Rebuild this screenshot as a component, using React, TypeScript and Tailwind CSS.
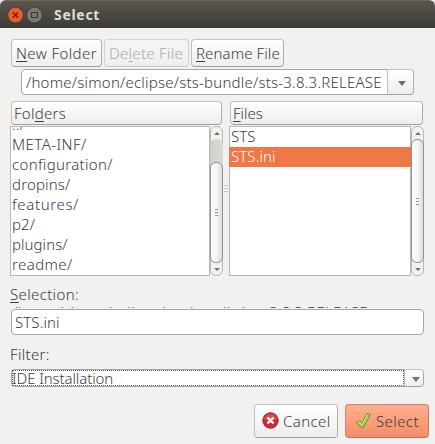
import React from "react";

const rows = [
  { name: "../", tracking: "tracking-[0.2px]" },
  { name: "META-INF/", tracking: "tracking-[0.45px]" },
  { name: "configuration/", tracking: "tracking-[0.32px]" },
  { name: "dropins/", tracking: "tracking-[0.15px]" },
  { name: "features/", tracking: "tracking-[0.65px]" },
  { name: "p2/", tracking: "tracking-[0.1px]" },
  { name: "plugins/", tracking: "tracking-[0.05px]" },
  { name: "readme/", tracking: "tracking-[0.4px]" },
];

const PATH = "/home/simon/eclipse/sts-bundle/sts-3.8.3.RELEASE";

const U = ({ children }: { children: React.ReactNode }) => (
  <span className="underline decoration-1 underline-offset-2">{children}</span>
);

const base = "flex shrink-0 items-center rounded-[4px] border bg-gradient-to-b whitespace-nowrap";
const button = base + " border-[#c3c0bb] border-b-[#a3a09b] border-r-[#b0ada8] from-white to-[#eeedec]";
const disabledButton = base + " border-[#d5d3d0] border-r-[#d0cecb] border-b-[#c8c6c3] from-[#f6f5f4] to-[#f0efee] text-[#acaaa8]";
const defaultButton = base + " border-[#c18a74] border-r-[#b08070] border-b-[#a87a68] from-[#ffaf91] to-[#f48d66]";

function Arrow({ up = false, large = false }: { up?: boolean; large?: boolean }) {
  return (
    <svg width={large ? 8 : 6} height={large ? 5 : 3} viewBox="0 0 8 5" preserveAspectRatio="none">
      <path d={up ? "M0 5L4 0L8 5Z" : "M0 0H8L4 5Z"} fill="#73716d" />
    </svg>
  );
}

function Grip({ wide = false }: { wide?: boolean }) {
  const bar = wide ? "h-px bg-[#cac8c4]" : "h-px bg-[#9b9893]";
  return (
    <span className={"flex flex-col " + (wide ? "w-[4px] gap-[2px]" : "w-[3px] gap-[2px]")}>
      <i className={bar} />
      <i className={bar} />
      <i className={bar} />
    </span>
  );
}

function Scrollbar({ gap }: { gap: string }) {
  return (
    <div className="flex h-[150px] w-[13px] shrink-0 flex-col rounded-[6px] border border-[#b9b6b1] bg-[#f3f2f1]">
      <div className="flex h-[12px] shrink-0 items-center justify-center"><Arrow up /></div>
      <div className={"-mx-px flex min-h-0 flex-1 flex-col rounded-[6px] bg-gradient-to-r from-[#cfcdca] to-[#dddbd8] " + gap}>
        <div className="flex flex-1 items-center justify-center rounded-[6px] border border-[#95928d] bg-gradient-to-r from-white via-[#f6f5f4] to-[#dfdddb]">
          <Grip />
        </div>
      </div>
      <div className="flex h-[12px] shrink-0 items-center justify-center"><Arrow /></div>
    </div>
  );
}

export default function App() {
  return (
    <div className="h-[444px] w-[435px] overflow-hidden bg-[#f2f1f0] font-['Noto_Sans',sans-serif] text-[15px] leading-[20px] font-light text-[#3c3c3c]">
      <div className="h-[28px] bg-[#e8e8e8]">
        <header className="flex h-[28px] items-center rounded-t-[6px] border-t border-[#6b685f] bg-gradient-to-b from-[#59564d] to-[#3d3b36] pl-[7px]">
          <svg width="36" height="18" viewBox="0 0 36 18">
            <circle cx="8.500" cy="9" r="7.900" fill="#ec5b29" stroke="#35332e" strokeWidth=".8" />
            <path d="M6 6.500l5 5m0-5l-5 5" stroke="#4a2317" strokeWidth="1.200" />
            <circle cx="27.500" cy="9" r="7.900" fill="#7a7871" stroke="#35332e" strokeWidth=".8" />
            <rect x="24.500" y="6.500" width="6" height="5" fill="none" stroke="#3a3833" />
          </svg>
          <h1 className="ml-[11px] text-[14px] font-bold tracking-[0.7px] text-[#dfdbd2]">Select</h1>
        </header>
      </div>

      <div className="flex gap-[2px] pt-[11px] pl-[11px]">
        <button className={button + " h-[28px] w-[91px] pb-px pl-[4px] tracking-[0.4px]"}><span><U>N</U>ew Folder</span></button>
        <button className={disabledButton + " h-[28px] w-[85px] pb-px pl-[4px] tracking-[0.3px]"}><span>De<U>l</U>ete File</span></button>
        <button className={button + " h-[28px] w-[93px] pb-px pl-[4px] tracking-[0.1px]"}><span><U>R</U>ename File</span></button>
      </div>

      <div className="mt-[2px] ml-[21px] flex h-[26px] w-[393px]">
        <div className="flex flex-1 items-center rounded-l-[4px] border border-[#aaa7a2] bg-white pb-px pl-[4px] tracking-[0.22px] whitespace-nowrap"><span>{PATH}</span></div>
        <div className={button + " -ml-px w-[27px] justify-center rounded-l-none pt-[2px] pl-[3px]"}><Arrow large /></div>
      </div>

      <main className="mt-[6px] ml-[10px] flex h-[175px]">
        <section className="w-[213px]">
          <div className={button + " ml-px h-[24px] w-[211px] pb-px pl-[2px] tracking-[0.25px]"}><span>Fol<U>d</U>ers</span></div>
          <div className="mt-px flex">
            <div className="flex h-[150px] w-[200px] flex-col justify-end overflow-hidden border border-[#bbb8b3] bg-white pb-px pl-[1px]">
              {rows.map((r) => <div key={r.name} className={"h-[20px] shrink-0 " + r.tracking}>{r.name}</div>)}
            </div>
            <Scrollbar gap="pt-[23px]" />
          </div>
        </section>
        <div className="flex w-[6px] items-center justify-center pb-[1px]"><Grip wide /></div>
        <section className="w-[195px]">
          <div className={button + " ml-px h-[24px] w-[193px] pb-px pl-[2px]"}><span><U>F</U>iles</span></div>
          <div className="mt-px flex">
            <div className="h-[150px] w-[182px] border border-[#bbb8b3] bg-white leading-[18px] tracking-[0.1px]">
              <div className="h-[20px] pl-[1px]">STS</div>
              <div className="-mr-px -ml-px h-[20px] bg-[#f07746] pl-[2px] text-white">STS.ini</div>
            </div>
            <Scrollbar gap="" />
          </div>
        </section>
      </main>

      <div className="mt-[8px] ml-[10px] h-[20px] tracking-[0.35px]"><U>S</U>election:</div>
      <div className="mt-[2px] mb-px ml-[12px] h-[2px] overflow-hidden tracking-[0.22px] whitespace-nowrap">
        <div className="-mt-[4px]">{PATH}</div>
      </div>
      <div className="ml-[11px] flex h-[26px] w-[413px] items-center rounded-[4px] border border-[#aaa7a2] bg-white pb-px pl-[3px] tracking-[0.1px]">STS.ini</div>

      <div className="mt-[9px] ml-[10px] h-[20px] tracking-[0.3px]">Filter:</div>
      <div className="mt-[5px] ml-[11px] flex h-[18px] w-[413px]">
        <div className="flex-1 rounded-l-[4px] border border-[#aaa7a2] bg-white">
          <div className="flex h-[16px] items-center border border-dotted border-[#555] pb-px tracking-[-0.1px]"><span className="-ml-px">IDE Installation</span></div>
        </div>
        <div className={button + " -ml-px w-[20px] justify-center rounded-l-none pt-[2px] pl-[3px]"}><Arrow large /></div>
      </div>

      <footer className="mt-[17px] ml-[254px] flex gap-[7px]">
        <button className={button + " h-[34px] w-[84px] gap-[4px] pb-px pl-[7px] tracking-[0.4px]"}>
          <svg width="17" height="17" viewBox="0 0 17 17">
            <circle cx="8.500" cy="8.500" r="7.700" fill="#cb2a30" stroke="#a51c22" />
            <path d="M2 7a6.700 6.700 0 0 1 13 0q-6 3-13 0" fill="#de6b6b" opacity=".6" />
            <path d="M5.500 5.500l6 6m0-6l-6 6" stroke="#fff" strokeWidth="2.400" />
          </svg>
          <span>Cancel</span>
        </button>
        <button className={defaultButton + " h-[34px] w-[84px] gap-[4px] pb-px pl-[9px] tracking-[0.4px]"}>
          <svg width="17" height="17" viewBox="0 0 17 17">
            <path d="M1.500 10.500L4.500 8.500L7 11.500L12 1.500L15.500 2.500L8 16H6.500Z" fill="#a5cf47" stroke="#6c9428" strokeLinejoin="round" />
            <path d="M3 10.500l1.300-.8L7 13l5.700-10.300" fill="none" stroke="#d3ec90" strokeWidth="1" />
          </svg>
          <span>Select</span>
        </button>
      </footer>
    </div>
  );
}
